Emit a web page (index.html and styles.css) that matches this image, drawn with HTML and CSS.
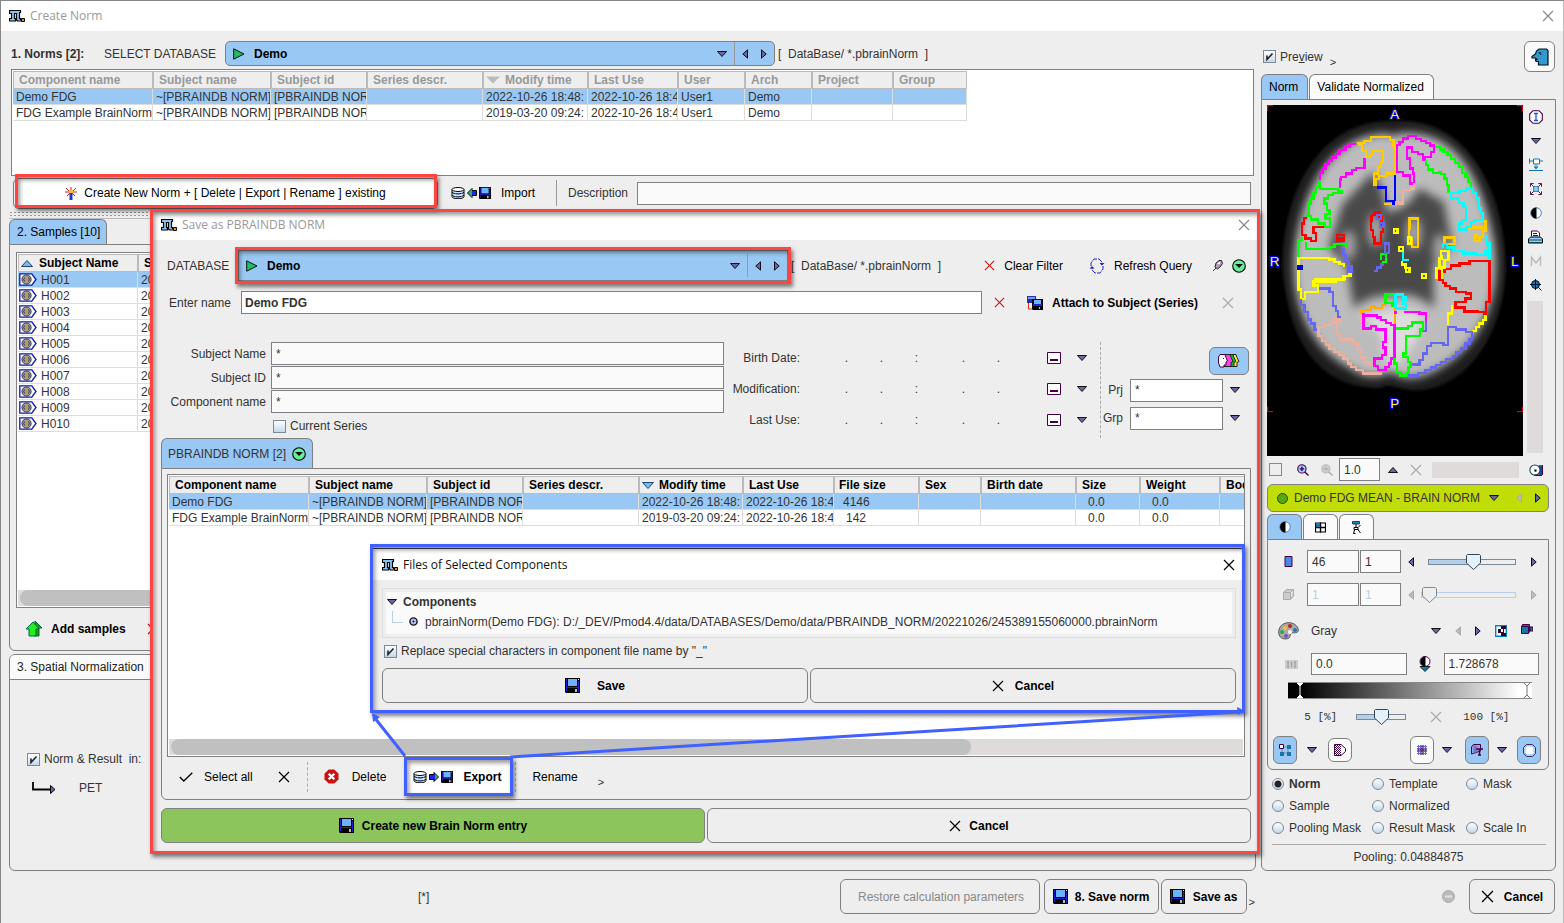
FILE: index.html
```html
<!DOCTYPE html>
<html lang="en">
<head>
<meta charset="utf-8">
<title>Create Norm</title>
<link rel="stylesheet" href="styles.css">
</head>
<body>
<svg class="sprite" aria-hidden="true">
  <symbol id="logo" viewBox="0 0 16 12"><path d="M.5.5h11v2h-1v6h1v1h1v1.500h-4l-1-1V3.500h-2v5h1v2.500h-6V8.500h2v-5h-2z" fill="#8ac4ee" stroke="#000" stroke-width="1.200"/><path d="M12.500 8.500h3v3h-3z" fill="#f80" stroke="#000"/></symbol>
  <symbol id="close" viewBox="0 0 12 12"><path d="M1 1l10 10M11 1L1 11" fill="none" stroke="currentColor" stroke-width="1.200"/></symbol>
  <symbol id="down" viewBox="0 0 10 6"><path d="M.5.5h9L5 5.500z" fill="#66a" stroke="#111"/></symbol>
  <symbol id="up" viewBox="0 0 10 6"><path d="M.5 5.500h9L5 .5z" fill="#66a" stroke="#111"/></symbol>
  <symbol id="left" viewBox="0 0 6 10"><path d="M5.500.8v8.400L.8 5z" fill="#66a" stroke="#111"/></symbol>
  <symbol id="right" viewBox="0 0 6 10"><path d="M.5.8v8.400L5.200 5z" fill="#66a" stroke="#111"/></symbol>
  <symbol id="leftg" viewBox="0 0 6 10"><path d="M5.500.8v8.400L.8 5z" fill="#bbb" stroke="#aaa"/></symbol>
  <symbol id="rightg" viewBox="0 0 6 10"><path d="M.5.8v8.400L5.200 5z" fill="#bbb" stroke="#aaa"/></symbol>
  <symbol id="play" viewBox="0 0 12 12"><path d="M.7.8L11 6 .7 11.200z" fill="#2b6" stroke="#111"/></symbol>
  <symbol id="floppy" viewBox="0 0 15 15"><path d="M0 0h15v15H1l-1-1z" fill="#000"/><path d="M1 1h1v12H1zM13 3h1v11h-1zM2 9h11v1H2z" fill="#22c"/><path d="M3 1h9v7H3z" fill="#6ab4ff"/><path d="M13 1h1v1h-1z" fill="#fff"/><path d="M10 11h2v3h-2z" fill="#bbb"/></symbol>
  <symbol id="database" viewBox="0 0 14 12"><path d="M1 2.500v7c0 3 12 3 12 0v-7" fill="#cfe4ff" stroke="#000"/><ellipse cx="7" cy="2.500" rx="6" ry="2" fill="#fff" stroke="#000"/><path d="M1 5c1 2.500 11 2.500 12 0M1 8c1 2.500 11 2.500 12 0" fill="none" stroke="#000"/><path d="M4 6.500h1M7 7h1M10 6.500h1M4 9.500h1M7 10h1M10 9.500h1" stroke="#36f"/></symbol>
  <symbol id="arrowl" viewBox="0 0 10 10"><path d="M.5 5L5 .5v2h4.500v5H5v2z" fill="#22e" stroke="#000"/><path d="M1 5l4-4v8z" fill="#2b5"/></symbol>
  <symbol id="arrowr" viewBox="0 0 10 10"><path d="M9.500 5L5 .5v2H.5v5H5v2z" fill="#22e" stroke="#000"/><path d="M9 5L6 2v6z" fill="#2b5"/></symbol>
  <symbol id="wand" viewBox="0 0 12 13"><path d="M6 0v5M1 1l4 4M11 1L7 5M0 5h12M2 9l3-3M10 9L7 6" stroke="#c22" fill="none"/><path d="M4 3h4v3H4z" fill="#fb3"/><path d="M4.500 6h3v7h-3z" fill="#23d"/></symbol>
  <symbol id="brain" viewBox="0 0 18 13"><path d="M.8.8h12L17 6.500l-4.200 5.700H.8z" fill="#fff" stroke="#11b" stroke-width="1.300"/><circle cx="7.500" cy="6.500" r="4.600" fill="#9aa09a" stroke="#333"/><path d="M5.500 4.500q-1.500 2 0 4M9.500 4.500q1.500 2 0 4" fill="none" stroke="#333"/><path d="M6.500 5l2 3M8.500 5l-2 3" stroke="#e83"/></symbol>
  <symbol id="addup" viewBox="0 0 18 16"><path d="M10 0l7 7h-3v8H9z" fill="#2a9a10" stroke="#063"/><path d="M8 1L1 8h3v7h7V8h3z" fill="#2e2" stroke="#064"/></symbol>
  <symbol id="greendown" viewBox="0 0 14 14"><circle cx="7" cy="7" r="6.300" fill="#6e9" stroke="#000" stroke-width="1.100"/><path d="M3 5h8L7 9z" fill="#111"/></symbol>
  <symbol id="refresh" viewBox="0 0 16 16"><path d="M2 8V5l3-4h5l3 3v3M14 8v3l-3 4H6l-3-3V9" fill="none" stroke="#22c" stroke-dasharray="5 1"/><path d="M10.500 5h5L13 7.500zM.5 10.500h5L3 8z" fill="#22c"/></symbol>
  <symbol id="pin" viewBox="0 0 10 12"><path d="M0 11l3-3" stroke="#333"/><path d="M3 3l3-2.500h2.500l1 3L7 7l-2.500 2L2 7z" fill="#b9b" stroke="#222"/><path d="M4 4l2-2h1v2z" fill="#fff"/></symbol>
  <symbol id="attach" viewBox="0 0 16 14"><path d="M0 0h9v7H0z" fill="#23a"/><path d="M1 1h7v2H1z" fill="#79f"/><path d="M1.500 7v6H6" fill="none" stroke="#e22"/><path d="M5 3h11v11H6l-1-1z" fill="#000"/><path d="M7 4h7v4H7z" fill="#6ab4ff"/><path d="M6 8h9v2H6z" fill="#22c"/><path d="M12 11h1v2h-1z" fill="#ccc"/></symbol>
  <symbol id="calendar" viewBox="0 0 14 12"><path d="M.5.5h13v11H.5z" fill="#fff" stroke="#404"/><path d="M3 8h8" stroke="#404" stroke-width="2"/></symbol>
  <symbol id="heads" viewBox="0 0 22 14"><path d="M13 .5h5l1 3 2 4-2 1v4h-7z" fill="#fe3" stroke="#222"/><path d="M10 .5h5l1 3 2 4-2 1v4H9z" fill="#1b2" stroke="#222"/><path d="M7 .5h5l1 3 2 4-2 1v4H6z" fill="#f4e" stroke="#222"/><path d="M2 .5h5l1 3 1.500 3.500-1.500 1v3H6v2H2L.5 9V3z" fill="#fff" stroke="#404"/><path d="M5 4h1v1H5z" fill="#222"/></symbol>
  <symbol id="delete" viewBox="0 0 16 16"><path d="M5 .5h6L15.500 5v6L11 15.500H5L.5 11V5z" fill="#c11"/><path d="M5 5l6 6M11 5l-6 6" stroke="#fff" stroke-width="2.400"/></symbol>
  <symbol id="tick" viewBox="0 0 14 10"><path d="M.8 5l4 4L13.300.8" fill="none" stroke="#000" stroke-width="1.300"/></symbol>
  <symbol id="face" viewBox="0 0 18 18"><path d="M8 1h7.500L17 2.500V17H7.500v-3.500H5L4.500 11.500H6L4.500 10H1V8.500L4.500 6 5.500 3z" fill="#39c" stroke="#012" stroke-width="1.200"/><path d="M7.500 5h3M9 6.500h1" stroke="#012"/></symbol>
  <symbol id="info" viewBox="0 0 14 14"><path d="M4 .7h6L13.300 4v6L10 13.300H4L.7 10V4z" fill="#fff" stroke="#404" stroke-width="1.100"/><path d="M5 3.500h4M7 3.500v7M5 10.500h4" stroke="#25d" stroke-width="1.300"/></symbol>
  <symbol id="level" viewBox="0 0 14 13"><path d="M.5 0v5M0 2.500h4M10 2.500h4M0 12h14" stroke="#17a"/><path d="M4.500.5h6v5h-6z" fill="#fff" stroke="#17a"/><path d="M7 6v2" stroke="#17a"/><path d="M4.500 8h5L7 11z" fill="#17a"/></symbol>
  <symbol id="fit" viewBox="0 0 13 13"><path d="M4 4h5v5H4z" fill="#9cf" stroke="#17a"/><path d="M.5 4V.5H4M9 .5h3.500V4M12.500 9v3.500H9M4 12.500H.5V9M1 1l3 3M12 1L9 4M12 12L9 9M1 12l3-3" fill="none" stroke="#404"/></symbol>
  <symbol id="contrast" viewBox="0 0 12 12"><circle cx="6" cy="6" r="5.300" fill="#fff" stroke="#48c"/><path d="M6.500 1v10.500A5.500 5.500 0 0 1 6.500.5z" fill="#000"/></symbol>
  <symbol id="printer" viewBox="0 0 15 14"><path d="M3.500 6V.5h6l2 2V6" fill="#fff" stroke="#404"/><path d="M5 3h4M5 5h5" stroke="#404"/><path d="M2.500 6.500h10l2 2v4H.5v-4z" fill="#9cf" stroke="#000"/><path d="M.5 9.500h14M.5 12h14" stroke="#145"/></symbol>
  <symbol id="mletter" viewBox="0 0 12 10"><path d="M1.500 10V1L6 7l4.500-6v9" fill="none" stroke="#bbb" stroke-width="1.400"/></symbol>
  <symbol id="target" viewBox="0 0 12 12"><circle cx="5.500" cy="5.500" r="4" fill="#17a" stroke="#013"/><path d="M5.500 0v11M0 5.500h11M8 8l3.500 3.500" stroke="#013"/></symbol>
  <symbol id="zoomin" viewBox="0 0 11 11"><circle cx="4.500" cy="4.500" r="3.800" fill="#9cf" stroke="#404"/><path d="M2.500 4.500h4M4.500 2.500v4M7 7l3.500 3.500" stroke="#404" stroke-width="1.300"/></symbol>
  <symbol id="zoomout" viewBox="0 0 11 11"><circle cx="4.500" cy="4.500" r="3.800" fill="#ccc" stroke="#bbb"/><path d="M2.500 4.500h4M7 7l3.500 3.500" stroke="#aaa" stroke-width="1.300"/></symbol>
  <symbol id="tape" viewBox="0 0 13 11"><path d="M9 1h4v9H9z" fill="#159"/><circle cx="5.500" cy="5.500" r="4.700" fill="#fff" stroke="#145"/><path d="M5 5h2v2H5z" fill="#000"/><path d="M12.500 1v9M5 10.500h7" stroke="#404"/></symbol>
  <symbol id="windows" viewBox="0 0 11 10"><path d="M.5.500h10v9H.5z" fill="#fff" stroke="#000" stroke-width="1.200"/><path d="M5.500 0v10M0 5h11" stroke="#000" stroke-width="1.400"/><path d="M1 1h4v3.500H1z" fill="#17a"/></symbol>
  <symbol id="tool" viewBox="0 0 10 13"><path d="M1 .5h7v2.500H1z" fill="#28b" stroke="#024" stroke-width=".8"/><path d="M4.500 3v3M2.500 6.500h4v2h-4zM3 9l-1 3.500h2M6 8l3 4M6.500 6.500L9 4" fill="none" stroke="#000"/></symbol>
  <symbol id="slab" viewBox="0 0 8 11"><path d="M.5.5h7v10h-7z" fill="#48e" stroke="#404"/></symbol>
  <symbol id="cube" viewBox="0 0 11 11"><path d="M.5 3.500h7v7h-7zM.5 3.500l3-3h7l-3 3M10.500.5v7l-3 3" fill="#ccc" stroke="#aaa"/></symbol>
  <symbol id="palette" viewBox="0 0 21 18"><path d="M9 .8c6-1 11 3 11.300 7 0 3-2 3-5 3-3-.5-3 1.500-3.500 4C11 18 .5 18.500.7 10 1 4 5 1.500 9 .8z" fill="#aaa" stroke="#555"/><circle cx="12" cy="4" r="2" fill="#b22"/><circle cx="7" cy="6" r="2" fill="#fb3"/><circle cx="4" cy="10" r="2" fill="#3a4"/><circle cx="8" cy="14" r="2" fill="#75b"/><circle cx="17" cy="8" r="2" fill="#27c"/><circle cx="12" cy="10" r="2" fill="#fff"/></symbol>
  <symbol id="invert" viewBox="0 0 12 12"><path d="M.7.7h10.600v10.600H.7z" fill="#fff" stroke="#08b" stroke-width="1.400"/><path d="M6 1h5v3H9v4h2v3H6V8H3V4h3z" fill="#303"/><path d="M6 4h2v3H6z" fill="#fff"/></symbol>
  <symbol id="camera" viewBox="0 0 12 10"><path d="M.5 2.500h7v7h-7zM.5 2.500l1-2h7v7l-1 2M9 3h3v4H9z" fill="#17a" stroke="#404"/></symbol>
  <symbol id="scale" viewBox="0 0 13 9"><path d="M0 0h13v9H0z" fill="#ccc"/><path d="M3 2v5M6.500 2v5M10 2v5M2 2h2M9 2h2M2 7h2M9 7h2" stroke="#999"/></symbol>
  <symbol id="contrastdown" viewBox="0 0 12 16"><circle cx="6" cy="5.500" r="5" fill="#fff" stroke="#404"/><path d="M6.500.5v10A5 5 0 0 1 6.500.5z" fill="#000"/><path d="M1 10.500h10l-5 5z" fill="#17a" stroke="#000" stroke-width=".8"/></symbol>
  <symbol id="nodes" viewBox="0 0 12 12"><path d="M3 3h6v6H3z" fill="none" stroke="#888"/><path d="M.5.5h4v4h-4z" fill="#fff" stroke="#404"/><path d="M8 1h4v4H8zM1 8h4v4H1zM8 8h4v4H8z" fill="#17a"/></symbol>
  <symbol id="halfd" viewBox="0 0 12 12"><path d="M.5.5H7l4.500 4v3L7 11.500H.5z" fill="#fff" stroke="#404"/><path d="M1 1.500h5M1 3.500h5M1 5.500h5M1 7.500h5M1 9.500h5" stroke="#404" stroke-dasharray="1 1"/><path d="M2 2.500h5M2 4.500h5M2 6.500h5M2 8.500h5M2 10.500h5" stroke="#404" stroke-dasharray="1 1"/></symbol>
  <symbol id="mesh" viewBox="0 0 10 10"><path d="M0 1.500h10M0 3.500h10M0 6.500h10M0 8.500h10M1.500 0v10M3.500 0v10M6.500 0v10M8.500 0v10" stroke="#66c"/><path d="M5 0v10M0 5h10" stroke="#404"/></symbol>
  <symbol id="tletter" viewBox="0 0 12 12"><path d="M.5 10V3l2-2.500h7V7z" fill="#9ad" stroke="#404"/><path d="M2 3h5M2 5h5M2 7h5M4 1v8" stroke="#66c"/><path d="M5 5h7M8.500 5v6M7 11h3" stroke="#404" stroke-width="1.500"/></symbol>
  <symbol id="octagon" viewBox="0 0 13 13"><path d="M3.500.7h6l2.800 2.800v6l-2.800 2.800h-6L.7 9.500v-6z" fill="#fff" stroke="#303"/><path d="M4 2h5l2 2v5l-2 2H4L2 9V4z" fill="none" stroke="#7cf"/></symbol>
  <symbol id="stop" viewBox="0 0 13 13"><circle cx="6.500" cy="6.500" r="6" fill="#bbb" stroke="#aaa"/><path d="M3 6.500h7" stroke="#ddd" stroke-width="2.400"/></symbol>
  <symbol id="bullet" viewBox="0 0 9 9"><circle cx="4.500" cy="4.500" r="3.600" fill="#bbe" stroke="#111" stroke-width="1.400"/><path d="M4 4h1v1H4z" stroke="#111" stroke-width=".8"/></symbol>
  <symbol id="branch" viewBox="0 0 24 12"><path d="M1 0v7.500h20" fill="none" stroke="#000" stroke-width="1.800"/><path d="M18.500 3.500v8l4.500-4z" fill="#66a" stroke="#000"/></symbol>
  <symbol id="sortg" viewBox="0 0 14 7"><path d="M0 0h14L7 7z" fill="#bbb"/></symbol>
  <symbol id="sortd" viewBox="0 0 12 7"><path d="M.5.5h11L6 6.500z" fill="#7bd" stroke="#247"/></symbol>
  <symbol id="sortu" viewBox="0 0 12 7"><path d="M.5 6.500h11L6 .5z" fill="#7bd" stroke="#247"/></symbol>
</svg>

<div class="app">
  <header class="titlebar main-title">
    <svg class="i-logo"><use href="#logo"/></svg><h1>Create Norm</h1>
    <button class="icon-btn dim" aria-label="Close"><svg class="i12"><use href="#close"/></svg></button>
  </header>

  <div class="workspace">
    <main class="left">
      <div class="norm-head">
        <b class="norms-label">1. Norms [2]:</b>
        <label class="db-label" for="db-main">SELECT DATABASE</label>
        <div class="combo">
          <svg class="i12"><use href="#play"/></svg>
          <select id="db-main"><option>Demo</option></select>
          <button class="icon-btn" aria-label="Previous"><svg class="i-h"><use href="#left"/></svg></button>
          <button class="icon-btn" aria-label="Next"><svg class="i-h"><use href="#right"/></svg></button>
        </div>
        <span class="pre">[  DataBase/ *.pbrainNorm  ]</span>
      </div>

      <div class="table-box norms-box">
        <table class="grid muted norms">
          <colgroup><col class="w140"><col class="w118"><col class="w96"><col class="w116"><col class="w105"><col class="w90"><col class="w67"><col class="w67"><col class="w81"><col class="w74"></colgroup>
          <thead><tr><th>Component name</th><th>Subject name</th><th>Subject id</th><th>Series descr.</th><th class="sorted"><svg class="i-sortg"><use href="#sortg"/></svg>Modify time</th><th>Last Use</th><th>User</th><th>Arch</th><th>Project</th><th>Group</th></tr></thead>
          <tbody>
            <tr class="sel"><td>Demo FDG</td><td>~[PBRAINDB NORM]</td><td>[PBRAINDB NORM]</td><td></td><td>2022-10-26 18:48:</td><td>2022-10-26 18:48</td><td>User1</td><td>Demo</td><td></td><td></td></tr>
            <tr><td>FDG Example BrainNorm</td><td>~[PBRAINDB NORM]</td><td>[PBRAINDB NORM]</td><td></td><td>2019-03-20 09:24:</td><td>2022-10-26 18:48</td><td>User1</td><td>Demo</td><td></td><td></td></tr>
          </tbody>
        </table>
      </div>

      <div class="create-row">
        <div class="marked create-wrap">
          <button class="btn create-btn"><svg class="i-wand"><use href="#wand"/></svg>Create New Norm + [ Delete | Export | Rename ] existing</button>
        </div>
        <button class="plain import"><svg class="i-db"><use href="#database"/></svg><svg class="i10"><use href="#arrowl"/></svg><svg class="i12"><use href="#floppy"/></svg><span class="gap8">Import</span></button>
        <label class="desc-label" for="desc">Description</label>
        <input class="field desc" id="desc" type="text">
      </div>
      <div class="splitter"></div>

      <div class="tabs"><button class="tab on samples-tab">2. Samples [10]</button></div>
      <section class="panel samples">
        <div class="table-box samples-box">
          <table class="grid subj">
            <colgroup><col class="w120"><col class="w96"></colgroup>
            <thead><tr><th class="sortcol"><svg class="i-sort"><use href="#sortu"/></svg>Subject Name</th><th>S</th></tr></thead>
            <tbody>
              <tr class="sel"><td><svg class="i-brain"><use href="#brain"/></svg>H001</td><td>20</td></tr>
              <tr><td><svg class="i-brain"><use href="#brain"/></svg>H002</td><td>20</td></tr>
              <tr><td><svg class="i-brain"><use href="#brain"/></svg>H003</td><td>20</td></tr>
              <tr><td><svg class="i-brain"><use href="#brain"/></svg>H004</td><td>20</td></tr>
              <tr><td><svg class="i-brain"><use href="#brain"/></svg>H005</td><td>20</td></tr>
              <tr><td><svg class="i-brain"><use href="#brain"/></svg>H006</td><td>20</td></tr>
              <tr><td><svg class="i-brain"><use href="#brain"/></svg>H007</td><td>20</td></tr>
              <tr><td><svg class="i-brain"><use href="#brain"/></svg>H008</td><td>20</td></tr>
              <tr><td><svg class="i-brain"><use href="#brain"/></svg>H009</td><td>20</td></tr>
              <tr><td><svg class="i-brain"><use href="#brain"/></svg>H010</td><td>20</td></tr>
            </tbody>
          </table>
          <div class="hscroll"><div class="thumb"></div></div>
        </div>
        <div class="samples-actions">
          <button class="plain strong"><svg class="i-up"><use href="#addup"/></svg>Add samples</button>
          <button class="icon-btn red" aria-label="Remove"><svg class="i12"><use href="#close"/></svg></button>
        </div>
      </section>

      <section class="panel spatial">
        <h2>3. Spatial Normalization</h2>
        <div class="spatial-body">
          <label class="check-line"><input type="checkbox" checked><span class="pre">Norm &amp; Result  in:</span></label>
          <div class="pet"><svg class="i-branch"><use href="#branch"/></svg><span>PET</span></div>
        </div>
      </section>
    </main>

    <aside class="right">
      <div class="preview-head">
        <label class="check-line"><input type="checkbox" checked><span>Pre<u>v</u>iew</span></label><span class="more">&gt;</span>
        <button class="btn face-btn" aria-label="Orientation"><svg class="i18"><use href="#face"/></svg></button>
      </div>
      <div class="tabs"><button class="tab on">Norm</button><button class="tab">Validate Normalized</button></div>
      <section class="panel preview">
        <div class="viewer">
          <svg class="brain-view" viewBox="0 0 768 1053" role="img" aria-label="Brain slice with regions">
            <defs><filter id="soft" x="-20%" y="-20%" width="140%" height="140%"><feGaussianBlur stdDeviation="14"/></filter><filter id="soft2" x="-20%" y="-20%" width="140%" height="140%"><feGaussianBlur stdDeviation="5"/></filter></defs>
            <rect width="768" height="1053" fill="#000"/>
            <path filter="url(#soft2)" d="M380 48C600 30 720 260 716 500C705 700 600 840 460 856C400 860 370 830 340 850C150 850 60 700 46 480C50 240 170 40 380 48z" fill="#1c1c1c"/>
            <path filter="url(#soft)" d="M360 84Q378 100 396 84C560 70 640 200 680 400C710 580 640 730 500 800Q420 840 372 800Q310 835 250 790C110 720 60 560 88 400C120 230 200 90 360 84z" fill="#bcbcbc"/>
            <path filter="url(#soft)" d="M300 220Q330 170 360 320Q420 320 455 250L530 290L555 420L500 480L500 610Q450 560 380 570Q300 570 260 610L240 480L185 430L225 300z" fill="#484848"/>
            <g filter="url(#soft)" fill="#a4a4a4"><ellipse cx="325" cy="375" rx="24" ry="50"/><ellipse cx="440" cy="385" rx="24" ry="50"/><ellipse cx="245" cy="420" rx="22" ry="44"/><ellipse cx="520" cy="430" rx="22" ry="44"/></g>
            <path filter="url(#soft)" d="M290 640Q380 590 470 630L450 700Q400 780 378 780Q340 760 350 700z" fill="#ddd"/>
            <g transform="translate(-33 -225)" fill="none" stroke-width="7" shape-rendering="crispEdges">
              <path stroke="#f0f" d="M300 342H280V350H268V360H250V372H240V382H228V392H218V402H208V415H200V428H192V450M325 385V413H300V420H288V430H270V440H255V448H252V475M422 430V345H430V335H440V325H455V318H480V326H495V332H510V338H522V346H533V365H525V380H505V388H500V372H485V365H468V352H452V385H462V415H470V430H474V460H462V436H440V425H422"/>
              <path stroke="#fc0" d="M303 338H325V332H345V320H402V330H412V350H416V430H390V438H368V447H360V465H354V430H366V410H374V395H380V362H350V374H342V380H330V362H318V345H305M385 522H440M460 565H485V650H468V625H458V595H460zM565 622H595V642H565zM608 597H640V592H680M670 572H688V602H680V620H670V632H658V612H665"/>
              <path stroke="#00f" d="M362 472H390V512H412V522H416V435"/>
              <path stroke="#ebb0a0" d="M474 460V475H465V480H440V516H420V522H440V506"/>
              <path stroke="#0f0" d="M536 350H552V358H562V366H574V375H585V386H596V398H608V410H618V428H628V440H637V455H645V470M510 390V405H515V418H530V428H548V425H555V432H565V445H572V465H577V490M190 452V470H180V485H172V505H163V520H157V556M190 477H245V482H257V488H230V495H215V505H205V520H212V540H220V552H208V565H222V590H205V580H185V568H165V558H150M125 690V630H138V622M150 637V657H222V650H235V642H270V655M375 690V672H390V695H378"/>
              <path stroke="#0ff" d="M580 488H610V482H630V475H648V488H660V505H668V535H675V548H680V570H655V576H645V590H632V598H608V580H618V570H630V530H622V518H608V505H585V490M560 655V642H572V652H592V662H622V670H660V675H688V660H690M693 615V640H700V690M440 665V690H458"/>
              <path stroke="#f00" d="M152 563H143V580H137V615H148V625H165V632H180V608H172V590H205M243 615H263V631H243zM243 623H263M347 555H355V547H370V560H376V590H380V605H374V640H355V620H350V600H345zM700 750V692H640V700H610V706H585V716H565V725H555V748"/>
              <path stroke="#ff0" d="M127 750V683H218V688H235V695H250V702H263V710M283 728V738H265V746H175M413 597H424V608H413zM455 622H465V640H455zM429 650H441V662H429zM498 732H510V744H498zM437 693V703H448V713H460V725H450V710M555 662H577V690H565V712H556V742H541V714H550V685H557z"/>
              <path stroke="#66e" d="M262 655V675H268V690H278V708H286V725H275V705M363 555H375V566H363zM371 578H382V590H371zM387 640H399V668H387zM385 703H375V712H362V722H355"/>
              <path fill="#00f" stroke="#00c" d="M127 709h10v6h-10z"/>
            </g>
            <g transform="translate(-33 495)" fill="none" stroke-width="7" shape-rendering="crispEdges">
              <path stroke="#ff0" d="M127 0V58H135V86H146V65H185V46H172V34H240V28H262V18H278V8M588 105V130H576V165M688 135V150H680V160H668V170H660V183H648M541 0V22H558V0"/>
              <path stroke="#66e" d="M135 88V105H145V125H155V148H165V160H175V178H188M190 55H220V65H230V108H240V122H245V140H255M465 283H490V270H500V250H512V228H525V218H562V225H575V170H600V178H630V185H648V208H640V220H628V235H615V245H600V258H590V267H570V276H555V285H540V292H525V300H508V308H485V316H455M510 140V182H498"/>
              <path stroke="#ebb0a0" d="M187 182V170H205V165H225V158H235V148H255V158H243V195H252V208H290V220H305V240H315V262H325V275H340V282H358M187 178V198H198V212H210V225H220V235H235V245H250V255H262V265H275V280H285V290H300V300H320V310H377M315 135V160"/>
              <path stroke="#fa0" d="M316 132V120H345V108H355V114H378V105H390M416 110V165"/>
              <path stroke="#f0f" d="M322 128V175H345V168H360V178H388V215H380V232H388V255H378V265H355V288H365V300H388V290H398V280H405V265H415V165H405V158H390V150H375V142H362V136H325M418 132V122M445 125H490V130H510V155"/>
              <path stroke="#0f0" d="M388 73H415V108H408V98H388zM420 175H455V168H468V157H500V178H492V198H450V250H440V260H455V275H463V290H457V308H450V316H433V305H422V280H415V265"/>
              <path stroke="#0ff" d="M420 73H440V82H450V92H442V102H450V115H420M418 112V73"/>
              <path stroke="#f00" d="M550 0V30H560V38H568V48H582V55H600V65H630V70H644V85H628V95H598V112H625V124H665V126H685V130H690V95H700V0"/>
            </g>
            <path fill="none" stroke="#f00" stroke-width="3" d="M2 18V2H18M750 2H766V18M2 905V920H18M750 920H766V905"/>
            <g class="axis"><text x="370" y="42">A</text><text x="8" y="482">R</text><text x="732" y="482">L</text><text x="370" y="908">P</text></g>
          </svg>
          <div class="view-tools">
            <button class="icon-btn" aria-label="Info"><svg class="i14"><use href="#info"/></svg></button>
            <button class="icon-btn" aria-label="More"><svg class="i-v"><use href="#down"/></svg></button>
            <button class="icon-btn" aria-label="Level"><svg class="i14"><use href="#level"/></svg></button>
            <button class="icon-btn" aria-label="Fit"><svg class="i12"><use href="#fit"/></svg></button>
            <button class="icon-btn" aria-label="Contrast"><svg class="i12"><use href="#contrast"/></svg></button>
            <button class="icon-btn" aria-label="Print"><svg class="i15"><use href="#printer"/></svg></button>
            <button class="icon-btn" aria-label="Marker"><svg class="i12"><use href="#mletter"/></svg></button>
            <button class="icon-btn" aria-label="Centre"><svg class="i12"><use href="#target"/></svg></button>
            <div class="vtrack"></div>
          </div>
        </div>
        <div class="zoom-row">
          <input type="checkbox" class="flat" aria-label="Lock zoom">
          <button class="icon-btn zi" aria-label="Zoom in"><svg class="i12"><use href="#zoomin"/></svg></button>
          <button class="icon-btn" aria-label="Zoom out"><svg class="i12"><use href="#zoomout"/></svg></button>
          <input class="field zoom-val" type="text" value="1.0" aria-label="Zoom">
          <button class="icon-btn" aria-label="Increase"><svg class="i-v"><use href="#up"/></svg></button>
          <button class="icon-btn faint" aria-label="Reset"><svg class="i12"><use href="#close"/></svg></button>
          <div class="htrack"></div>
          <button class="icon-btn" aria-label="Tape"><svg class="i14"><use href="#tape"/></svg></button>
        </div>
        <div class="mean-bar">
          <span class="dot"></span>
          <select aria-label="Image"><option>Demo FDG MEAN - BRAIN NORM</option></select>
          <button class="icon-btn" aria-label="Previous"><svg class="i-h"><use href="#leftg"/></svg></button>
          <button class="icon-btn" aria-label="Next"><svg class="i-h"><use href="#right"/></svg></button>
        </div>
        <div class="tabs subtabs">
          <button class="tab on" aria-label="Colors"><svg class="i12"><use href="#contrast"/></svg></button>
          <button class="tab" aria-label="Layout"><svg class="i11"><use href="#windows"/></svg></button>
          <button class="tab" aria-label="Tools"><svg class="i13"><use href="#tool"/></svg></button>
        </div>
        <div class="panel color-panel">
          <div class="crow slice">
            <svg class="i11 lead"><use href="#slab"/></svg>
            <input class="field n1" type="text" value="46" aria-label="Slice"><input class="field n2" type="text" value="1" aria-label="Step">
            <button class="icon-btn" aria-label="Previous"><svg class="i-h"><use href="#left"/></svg></button>
            <input class="slider" type="range" value="52" aria-label="Slice slider">
            <button class="icon-btn" aria-label="Next"><svg class="i-h"><use href="#right"/></svg></button>
          </div>
          <div class="crow slice off">
            <svg class="i11 lead"><use href="#cube"/></svg>
            <input class="field n1" type="text" value="1" aria-label="Frame"><input class="field n2" type="text" value="1" aria-label="Frame step">
            <button class="icon-btn" aria-label="Previous"><svg class="i-h"><use href="#leftg"/></svg></button>
            <input class="slider" type="range" value="0" aria-label="Frame slider">
            <button class="icon-btn" aria-label="Next"><svg class="i-h"><use href="#rightg"/></svg></button>
          </div>
          <div class="crow colors">
            <svg class="i21"><use href="#palette"/></svg>
            <select aria-label="Color table"><option>Gray</option></select>
            <button class="icon-btn" aria-label="Previous"><svg class="i-h"><use href="#leftg"/></svg></button>
            <button class="icon-btn" aria-label="Next"><svg class="i-h"><use href="#right"/></svg></button>
            <button class="icon-btn inv" aria-label="Invert"><svg class="i12"><use href="#invert"/></svg></button>
            <button class="icon-btn snap" aria-label="Snapshot"><svg class="i12"><use href="#camera"/></svg></button>
          </div>
          <div class="crow range">
            <svg class="i13 lead"><use href="#scale"/></svg>
            <input class="field" type="text" value="0.0" aria-label="Minimum">
            <button class="icon-btn" aria-label="Auto range"><svg class="i16"><use href="#contrastdown"/></svg></button>
            <input class="field" type="text" value="1.728678" aria-label="Maximum">
          </div>
          <svg class="ramp" viewBox="0 0 244 17" preserveAspectRatio="none"><defs><linearGradient id="rg"><stop offset=".05" stop-color="#000"/><stop offset=".95" stop-color="#fff"/></linearGradient></defs><rect width="244" height="17" fill="url(#rg)"/><path d="M0 .5h244M0 16.500h244" stroke="#888"/><path d="M9 1h6l-3 3zM9 16h6l-3-3zM12 2v13" fill="#fff" stroke="#fff"/><path d="M236 1l3 3 3-3M236 16l3-3 3 3M239 4v9" fill="#fff" stroke="#777"/></svg>
          <div class="crow percent">
            <span class="pre">  5 [%]</span>
            <input class="slider small" type="range" value="52" aria-label="Threshold">
            <button class="icon-btn faint" aria-label="Reset"><svg class="i12"><use href="#close"/></svg></button>
            <span class="pre">100 [%]</span>
          </div>
          <div class="crow modes">
            <button class="btn on" aria-label="Link"><svg class="i12"><use href="#nodes"/></svg></button>
            <button class="icon-btn" aria-label="Link options"><svg class="i-v"><use href="#down"/></svg></button>
            <button class="btn light sq" aria-label="Half"><svg class="i12"><use href="#halfd"/></svg></button>
            <button class="btn light push" aria-label="Mesh"><svg class="i10"><use href="#mesh"/></svg></button>
            <button class="icon-btn wide" aria-label="Mesh options"><svg class="i-v"><use href="#down"/></svg></button>
            <button class="btn on" aria-label="Text"><svg class="i12"><use href="#tletter"/></svg></button>
            <button class="icon-btn tight" aria-label="Text options"><svg class="i-v"><use href="#down"/></svg></button>
            <button class="btn on" aria-label="Contour"><svg class="i13"><use href="#octagon"/></svg></button>
          </div>
        </div>
        <div class="radios">
          <label><input type="radio" name="show" checked><b>Norm</b></label><label><input type="radio" name="show">Template</label><label><input type="radio" name="show">Mask</label>
          <label><input type="radio" name="show">Sample</label><label class="span2"><input type="radio" name="show">Normalized</label>
          <label><input type="radio" name="show">Pooling Mask</label><label><input type="radio" name="show">Result Mask</label><label><input type="radio" name="show">Scale In</label>
        </div>
        <p class="pooling">Pooling: 0.04884875</p>
      </section>
    </aside>
  </div>

  <footer class="footer">
    <span class="star">[*]</span>
    <button class="btn restore">Restore calculation parameters</button>
    <button class="btn save-norm"><svg class="i15"><use href="#floppy"/></svg>8. Save norm</button>
    <button class="btn save-as"><svg class="i15"><use href="#floppy"/></svg>Save as</button>
    <span class="more">&gt;</span>
    <svg class="i13 stop"><use href="#stop"/></svg>
    <button class="btn cancel-main"><svg class="i13"><use href="#close"/></svg>Cancel</button>
  </footer>

  <section class="dialog marked" role="dialog" aria-label="Save as PBRAINDB NORM">
    <header class="titlebar dialog-title">
      <svg class="i-logo"><use href="#logo"/></svg><h2>Save as PBRAINDB NORM</h2>
      <button class="icon-btn dim" aria-label="Close"><svg class="i12"><use href="#close"/></svg></button>
    </header>
    <div class="dialog-body">
      <div class="db-row">
        <label for="db-dlg">DATABASE</label>
        <div class="marked combo-mark">
          <div class="combo">
            <svg class="i12"><use href="#play"/></svg>
            <select id="db-dlg"><option>Demo</option></select>
            <button class="icon-btn" aria-label="Previous"><svg class="i-h"><use href="#left"/></svg></button>
            <button class="icon-btn" aria-label="Next"><svg class="i-h"><use href="#right"/></svg></button>
          </div>
        </div>
        <span class="pre">[  DataBase/ *.pbrainNorm  ]</span>
        <div class="db-tools">
          <button class="plain"><svg class="i11 red"><use href="#close"/></svg>Clear Filter</button>
          <button class="plain refresh"><svg class="i16"><use href="#refresh"/></svg>Refresh Query</button>
          <button class="icon-btn pin" aria-label="Pin"><svg class="i12"><use href="#pin"/></svg></button>
          <button class="icon-btn" aria-label="Options"><svg class="i14"><use href="#greendown"/></svg></button>
        </div>
      </div>
      <div class="name-row">
        <label for="entry">Enter name</label>
        <input class="field white strong" id="entry" type="text" value="Demo FDG">
        <button class="icon-btn red" aria-label="Clear"><svg class="i11"><use href="#close"/></svg></button>
        <button class="plain strong attach"><svg class="i16"><use href="#attach"/></svg>Attach to Subject (Series)</button>
        <button class="icon-btn faint" aria-label="Detach"><svg class="i12"><use href="#close"/></svg></button>
      </div>
      <div class="filters">
        <div class="text-filters">
          <label for="f1">Subject Name</label><input class="field" id="f1" type="text" value="*">
          <label for="f2">Subject ID</label><input class="field" id="f2" type="text" value="*">
          <label for="f3">Component name</label><input class="field" id="f3" type="text" value="*">
          <label class="check-line"><input type="checkbox"><span>Current Series</span></label>
        </div>
        <div class="date-filters">
          <span>Birth Date:</span><i>.</i><i>.</i><i>:</i><i>.</i><i>.</i><button class="icon-btn" aria-label="Calendar"><svg class="i14"><use href="#calendar"/></svg></button><button class="icon-btn" aria-label="Options"><svg class="i-v"><use href="#down"/></svg></button>
          <span>Modification:</span><i>.</i><i>.</i><i>:</i><i>.</i><i>.</i><button class="icon-btn" aria-label="Calendar"><svg class="i14"><use href="#calendar"/></svg></button><button class="icon-btn" aria-label="Options"><svg class="i-v"><use href="#down"/></svg></button>
          <span>Last Use:</span><i>.</i><i>.</i><i>:</i><i>.</i><i>.</i><button class="icon-btn" aria-label="Calendar"><svg class="i14"><use href="#calendar"/></svg></button><button class="icon-btn" aria-label="Options"><svg class="i-v"><use href="#down"/></svg></button>
        </div>
        <div class="group-filters">
          <button class="btn on heads" aria-label="Subjects"><svg class="i22"><use href="#heads"/></svg></button>
          <label for="prj">Prj</label><input class="field white" id="prj" type="text" value="*"><button class="icon-btn" aria-label="Projects"><svg class="i-v"><use href="#down"/></svg></button>
          <label for="grp">Grp</label><input class="field white" id="grp" type="text" value="*"><button class="icon-btn" aria-label="Groups"><svg class="i-v"><use href="#down"/></svg></button>
        </div>
      </div>
      <div class="tabs"><button class="tab on norm-tab">PBRAINDB NORM [2]<svg class="i14"><use href="#greendown"/></svg></button></div>
      <div class="panel list-panel">
        <div class="table-box list-box">
          <table class="grid list">
            <colgroup><col class="w140"><col class="w118"><col class="w96"><col class="w116"><col class="w104"><col class="w91"><col class="w85"><col class="w62"><col class="w95"><col class="w64"><col class="w80"><col class="w74"></colgroup>
            <thead><tr><th>Component name</th><th>Subject name</th><th>Subject id</th><th>Series descr.</th><th class="sorted"><svg class="i-sort"><use href="#sortd"/></svg>Modify time</th><th>Last Use</th><th class="near">File size</th><th>Sex</th><th>Birth date</th><th>Size</th><th>Weight</th><th>Body</th></tr></thead>
            <tbody>
              <tr class="sel"><td>Demo FDG</td><td>~[PBRAINDB NORM]</td><td>[PBRAINDB NORM]</td><td></td><td>2022-10-26 18:48:</td><td>2022-10-26 18:48</td><td class="num4">4146</td><td></td><td></td><td class="num">0.0</td><td class="num">0.0</td><td></td></tr>
              <tr><td>FDG Example BrainNorm</td><td>~[PBRAINDB NORM]</td><td>[PBRAINDB NORM]</td><td></td><td>2019-03-20 09:24:</td><td>2022-10-26 18:48</td><td class="num">142</td><td></td><td></td><td class="num">0.0</td><td class="num">0.0</td><td></td></tr>
            </tbody>
          </table>
          <div class="hscroll"><div class="thumb list-thumb"></div></div>
        </div>
        <div class="list-tools">
          <button class="plain all"><svg class="i14"><use href="#tick"/></svg>Select all</button>
          <button class="icon-btn" aria-label="Deselect"><svg class="i12"><use href="#close"/></svg></button>
          <span class="vsep"></span>
          <button class="plain"><svg class="i15"><use href="#delete"/></svg>Delete</button>
          <div class="marked blue export-mark"><button class="export"><svg class="i-db"><use href="#database"/></svg><svg class="i10"><use href="#arrowr"/></svg><svg class="i12"><use href="#floppy"/></svg><span class="gap8">Export</span></button></div>
          <span class="vsep near"></span>
          <button class="plain">Rename</button>
          <span class="more">&gt;</span>
        </div>
      </div>
      <div class="dialog-actions">
        <button class="btn green"><svg class="i15"><use href="#floppy"/></svg>Create new Brain Norm entry</button>
        <button class="btn"><svg class="i12"><use href="#close"/></svg>Cancel</button>
      </div>
    </div>

    <section class="files marked blue" role="dialog" aria-label="Files of Selected Components">
      <header class="titlebar files-title">
        <svg class="i-logo"><use href="#logo"/></svg><h3>Files of Selected Components</h3>
        <button class="icon-btn" aria-label="Close"><svg class="i12"><use href="#close"/></svg></button>
      </header>
      <div class="files-body">
        <div class="tree">
          <div class="node"><svg class="i-v"><use href="#down"/></svg><b>Components</b></div>
          <div class="leaf"><svg class="i9"><use href="#bullet"/></svg><span>pbrainNorm(Demo FDG): D:/_DEV/Pmod4.4/data/DATABASES/Demo/data/PBRAINDB_NORM/20221026/245389155060000.pbrainNorm</span></div>
        </div>
        <label class="check-line"><input type="checkbox" checked><span>Replace special characters in component file name by "_"</span></label>
        <div class="files-actions">
          <button class="btn save"><svg class="i15"><use href="#floppy"/></svg>Save</button>
          <button class="btn"><svg class="i12"><use href="#close"/></svg>Cancel</button>
        </div>
      </div>
    </section>
    <svg class="arrows" aria-hidden="true"><path d="M252 544L221 505M357 545L1086 500" fill="none" stroke="#4060ff" stroke-width="3"/><path d="M219 501l8 4-7 5zM1092 499l-8-4 1 8z" fill="#4060ff"/></svg>
  </section>
</div>
</body>
</html>
```
FILE: styles.css
```css
* { box-sizing: border-box; }
body { margin: 0; font: 12px/16px "Liberation Sans", Arial, sans-serif; color: #333; background: #eee; }
button, input, select { font: inherit; color: inherit; margin: 0; }
button { color: #000; padding: 0; }
h1, h2, h3, p { margin: 0; font-size: 12px; font-weight: 400; }
svg { display: block; flex: none; }
.sprite { position: absolute; width: 0; height: 0; }
.pre { white-space: pre; }

/* icon sizes */
.i9 { width: 9px; height: 9px; }
.i10 { width: 10px; height: 10px; }
.i11 { width: 11px; height: 11px; }
.i12 { width: 12px; height: 12px; }
.i13 { width: 13px; height: 13px; }
.i14 { width: 14px; height: 14px; }
.i15 { width: 15px; height: 15px; }
.i16 { width: 16px; height: 16px; }
.i18 { width: 18px; height: 18px; }
.i21 { width: 21px; height: 18px; }
.i22 { width: 22px; height: 14px; }
.i-v { width: 10px; height: 6px; }
.i-h { width: 6px; height: 10px; }
.i-db { width: 14px; height: 12px; }
.i-logo { width: 16px; height: 12px; }
.i-wand { width: 12px; height: 13px; }
.i-up { width: 18px; height: 16px; }
.i-branch { width: 24px; height: 12px; }

/* shared controls */
.icon-btn { border: 0; background: none; display: flex; align-items: center; justify-content: center; flex: none; }
.plain { border: 0; background: none; display: flex; align-items: center; white-space: nowrap; flex: none; }
.strong { font-weight: 700; }
.dim { color: #888; }
.faint { color: #aaa; }
.red { color: #c11; }
.gap8 { margin-left: 8px; }
.btn { display: flex; align-items: center; justify-content: center; border: 1px solid #808080; border-radius: 6px; background: #eee; font-weight: 700; height: 35px; white-space: nowrap; }
.btn.on { background: #9ac8f4; }
.btn.light { background: #fafafa; }
.field { border: 1px solid #808080; border-radius: 0; background: #fafafa; padding: 0 4px; height: 23px; min-width: 0; outline: 0; }
.field.white { background: #fff; }
.more { color: #333; padding-top: 10px; font-size: 11px; }
select { appearance: none; border: 0; background: url("data:image/svg+xml,%3Csvg xmlns='http://www.w3.org/2000/svg' width='10' height='6'%3E%3Cpath d='M.5.5h9L5 5.500z' fill='%2366a' stroke='%23111'/%3E%3C/svg%3E") no-repeat; outline: 0; min-width: 0; }
.check-line { display: flex; align-items: center; white-space: nowrap; gap: 4px; }
input[type="checkbox"] { appearance: none; flex: none; width: 13px; height: 13px; border: 1px solid #7a8a99; background: linear-gradient(#fff, #c4d8ea); }
input[type="checkbox"]:checked { background: url("data:image/svg+xml,%3Csvg xmlns='http://www.w3.org/2000/svg' width='11' height='11'%3E%3Cpath d='M3 4.500v4L8.500 2.500' fill='none' stroke='%23222' stroke-width='1.600'/%3E%3C/svg%3E"), linear-gradient(#fff, #c4d8ea); }
input[type="checkbox"].flat { background: #eee; }
input[type="radio"] { appearance: none; flex: none; width: 12px; height: 12px; border: 1px solid #7a8a99; border-radius: 50%; background: linear-gradient(#fff, #c4d8ea); }
input[type="radio"]:checked { background: radial-gradient(circle, #222 0 3px, transparent 4px), linear-gradient(#fff, #c4d8ea); }
.slider { appearance: none; background: none; height: 20px; outline: 0; min-width: 0; }
.slider::-webkit-slider-runnable-track { height: 6px; border: 1px solid #7a8a99; background: linear-gradient(90deg, #b4cfec 50%, #eee 50%); }
.slider::-webkit-slider-thumb { appearance: none; width: 15px; height: 16px; margin-top: -6px; background: url("data:image/svg+xml,%3Csvg xmlns='http://www.w3.org/2000/svg' width='15' height='16'%3E%3Cpath d='M.5 1.500l1-1h12l1 1V9l-7 6.500L.5 9z' fill='%23e4f0fb' stroke='%23345'/%3E%3C/svg%3E"); }
.off .slider::-webkit-slider-runnable-track { border-color: #b8cfe5; background: #eee; }
.off .slider::-webkit-slider-thumb { background: url("data:image/svg+xml,%3Csvg xmlns='http://www.w3.org/2000/svg' width='15' height='16'%3E%3Cpath d='M.5 1.500l1-1h12l1 1V9l-7 6.500L.5 9z' fill='%23eee' stroke='%237a8a99'/%3E%3C/svg%3E"); }
.off .field { color: #b8cfe5; }
.panel { border: 1px solid #808080; border-radius: 0 0 6px 6px; }
.tabs { display: flex; gap: 1px; }
.tab { border: 1px solid #808080; border-bottom: 0; border-radius: 6px 6px 0 0; background: #fafafa; height: 25px; padding: 0 9px 0 7px; display: flex; align-items: center; justify-content: center; }
.tab.on { background: #9ac8f4; }
.table-box { border: 1px solid #808080; background: #fff; padding: 1px; overflow: hidden; }

/* highlighted areas */
.marked { position: relative; }
.marked::after { content: ""; position: absolute; inset: 0; z-index: 2; pointer-events: none; border: 3px solid #ff4444; box-shadow: 2px 3px 4px rgba(0, 0, 0, .5), inset 2px 3px 4px rgba(0, 0, 0, .4); }
.marked.blue::after { border-color: #4060ff; }

/* data tables */
.grid { table-layout: fixed; border-collapse: separate; border-spacing: 0; }
.grid th { height: 18px; padding: 0 0 0 5px; text-align: left; color: #000; background: #eee; border: 1px solid #bbb; overflow: hidden; white-space: nowrap; }
.grid.muted th { color: #999; }
.grid td { height: 16px; padding: 1px 0 0 3px; line-height: 14px; border: solid #ddd; border-width: 0 1px 1px 0; overflow: hidden; white-space: nowrap; }
.grid tr.sel td { background: #9ac8f4; }
.grid .sorted svg { display: inline-block; margin: 0 5px 0 -3px; }
.grid .near { padding-left: 4px; }
.grid .num4 { padding-left: 9px; }
.grid .num { padding-left: 12px; }
.i-sortg { width: 14px; height: 8px; }
.i-sort { width: 12px; height: 7px; }
.norms { width: 954px; }
.list { width: 1125px; }
.subj { width: 216px; }
.subj .sortcol { padding-left: 4px; }
.subj .sortcol svg { display: inline-block; margin: 0 6px 0 -2px; }
.subj td:first-child { padding-left: 1px; }
.i-brain { width: 18px; height: 13px; display: inline-block; vertical-align: -2px; margin-right: 4px; }
.w62 { width: 62px; } .w64 { width: 64px; } .w67 { width: 67px; } .w74 { width: 74px; }
.w80 { width: 80px; } .w81 { width: 81px; } .w85 { width: 85px; } .w90 { width: 90px; }
.w91 { width: 91px; } .w95 { width: 95px; } .w96 { width: 96px; } .w104 { width: 104px; }
.w105 { width: 105px; } .w116 { width: 116px; } .w118 { width: 118px; } .w120 { width: 120px; } .w140 { width: 140px; }
.hscroll { margin-top: auto; height: 16px; background: #dfdbdb; }
.thumb { height: 16px; width: 60%; background: #c0c0c0; border-radius: 8px; margin-left: 2px; }
.list-thumb { width: 800px; }

/* window frame */
.app { position: relative; min-height: 100vh; display: flex; flex-direction: column; border: 1px solid #888; border-right-color: #bbb; background: #eee; overflow: hidden; }
.titlebar { display: flex; align-items: center; gap: 5px; background: #fff; font-family: "Open Sans", "Noto Sans", sans-serif; color: #999; padding: 0 9px 0 8px; }
.titlebar .icon-btn { margin-left: auto; }
.main-title { height: 30px; }
.workspace { flex: 1; display: flex; gap: 5px; padding: 0 7px 0 8px; }
.left { flex: 1; min-width: 0; display: flex; flex-direction: column; }
.right { width: 295px; display: flex; flex-direction: column; }

.norm-head { display: flex; align-items: center; padding: 10px 0 3px 2px; }
.norms-label { width: 93px; }
.db-label { width: 121px; }
.combo { display: flex; align-items: center; flex: 0 1 550px; height: 25px; border: 1px solid #808080; border-radius: 5px; background: #9ac8f4; padding: 0 1px 0 7px; color: #000; }
.combo select { flex: 1; height: 23px; padding-left: 9px; font-weight: 700; background-position: right 7px center; border-right: 1px solid #999; }
.combo .icon-btn { width: 19px; }
.norm-head > .pre { margin-left: 3px; }
.norms-box { height: 107px; margin: 0 2px 0 2px; }
.create-row { display: flex; align-items: center; height: 34px; padding: 0 5px 0 4px; }
.create-wrap { width: 425px; }
.create-wrap::after { inset: -4px 1px 1px 2px; }
.create-btn { width: 100%; height: 31px; font-weight: 400; background: #fff; gap: 7px; }
.import { padding: 0 21px 0 13px; gap: 2px; border-right: 1px solid #999; height: 26px; }
.desc-label { padding: 0 9px 0 11px; }
.desc { flex: 1; }
.splitter { height: 9px; background: radial-gradient(circle, #999 1px, transparent 1px) 0 1px / 4px 3px; border-bottom: 1px solid #bbb; }
.samples-tab { padding: 0 6px 0 7px; }
.samples { flex: 0 0 407px; border-radius: 0 0 6px 6px; padding: 7px 6px 0; display: flex; flex-direction: column; }
.samples-box { height: 356px; display: flex; flex-direction: column; }
.samples-actions { display: flex; align-items: center; gap: 21px; height: 42px; padding-left: 9px; }
.samples-actions .plain { gap: 8px; }
.spatial { flex: 1; margin-top: 3px; border-radius: 6px; overflow: hidden; }
.spatial h2 { height: 25px; line-height: 24px; background: #fafafa; border-bottom: 1px solid #808080; padding-left: 7px; color: #222; }
.spatial-body { padding: 71px 17px 0; }
.pet { display: flex; align-items: center; gap: 23px; margin-top: 13px; padding-left: 5px; }

/* preview column */
.preview-head { display: flex; align-items: center; height: 43px; padding: 8px 1px 0 2px; }
.preview-head .more { margin-left: 7px; }
.face-btn { width: 31px; height: 31px; margin-left: auto; background: #fafafa; }
.preview { flex: 1; padding: 5px; }
.viewer { display: flex; }
.brain-view { width: 256px; height: 351px; }
.axis text { font-size: 40px; fill: #ff0; stroke: #00f; stroke-width: 6px; paint-order: stroke; }
.view-tools { flex: 1; display: flex; flex-direction: column; align-items: center; padding-right: 2px; }
.view-tools .icon-btn { height: 24px; width: 24px; }
.vtrack { flex: 1; width: 16px; margin: 4px 2px 3px 0; background: #dfdbdb; }
.zoom-row { display: flex; align-items: center; height: 27px; padding: 0 7px 0 2px; gap: 12px; }
.zoom-row .zi { margin-left: 3px; }
.zoom-val { width: 41px; margin: 0 -4px 0 -6px; }
.htrack { flex: 1; height: 16px; background: #dfdbdb; margin: 0 -2px; }
.mean-bar { display: flex; align-items: center; height: 28px; margin: 1px 1px 2px 0; padding: 0 1px 0 9px; border: 1px solid #808080; border-radius: 6px; background: #c0dd08; }
.dot { width: 11px; height: 11px; border: 1px solid #340; border-radius: 50%; background: #5a1; }
.mean-bar select { flex: 1; height: 24px; padding-left: 6px; background-position: right 10px center; }
.mean-bar .icon-btn { width: 19px; }
.subtabs .tab { width: 35px; padding: 0; }
.color-panel { padding: 10px 9px 0; margin-right: 1px; height: 231px; }
.crow { display: flex; align-items: center; }
.slice { height: 23px; margin-bottom: 10px; padding-left: 6px; }
.lead { margin-right: 13px; }
.slice .n1 { width: 52px; margin-right: 1px; }
.slice .n2 { width: 41px; }
.slice .icon-btn { width: 20px; }
.slice .icon-btn:last-child { margin-right: -5px; }
.slice .slider { flex: 1; margin: 0 8px 0 7px; }
.off .slider { margin-left: 0; }
.colors { height: 30px; padding: 0 2px 0 1px; }
.colors select { flex: 1; height: 22px; padding-left: 12px; background-position: right 7px center; }
.colors .icon-btn { width: 20px; }
.colors .inv { margin: 0 6px 0 3px; }
.colors .snap { padding-bottom: 4px; }
.range { height: 36px; padding: 0 0 0 8px; }
.range .field { flex: 1; height: 22px; }
.range .icon-btn { width: 37px; }
.ramp { width: 244px; height: 17px; margin: 0 0 0 11px; }
.percent { height: 36px; gap: 19px; padding-left: 14px; font-family: "Liberation Mono", monospace; font-size: 11px; }
.percent .faint { margin: 0 2px 0 5px; }
.small { width: 50px; }
.modes { height: 28px; margin: 1px -2px 0 -4px; }
.modes .btn { width: 24px; height: 28px; }
.modes .btn.sq { height: 24px; }
.modes .icon-btn { width: 31px; padding-right: 2px; }
.modes .wide { padding-right: 6px; }
.modes .tight { width: 28px; }
.modes .push { margin-left: auto; }
.radios { display: grid; grid-template-columns: 100px 94px 1fr; row-gap: 6px; margin: 6px 4px 0 5px; padding: 0 0 8px; border-bottom: 1px solid #aaa; white-space: nowrap; }
.radios label { display: flex; align-items: center; gap: 5px; }
.span2 { grid-column: span 2; }
.pooling { text-align: center; padding-top: 4px; }

.footer { display: flex; align-items: center; height: 53px; padding: 0 8px 2px 417px; }
.star { margin-right: auto; }
.restore { width: 200px; font-weight: 400; color: #888; padding-left: 3px; }
.save-norm { width: 115px; margin: 0 2px 0 4px; gap: 7px; }
.save-as { width: 86px; gap: 8px; margin-right: 2px; }
.stop { margin: 0 14px 0 187px; }
.cancel-main { width: 86px; gap: 10px; }

/* save dialog */
.dialog { position: absolute; top: 208px; left: 149px; right: 303px; bottom: 70px; padding: 3px; background: #eee; display: flex; flex-direction: column; }
.dialog-title { height: 28px; padding: 0 7px 3px 8px; flex: none; }
.dialog-body { flex: 1; display: flex; flex-direction: column; padding: 0 6px 8px 8px; }
.db-row { display: flex; align-items: center; height: 51px; padding-left: 6px; }
.db-row > label { width: 68px; }
.combo-mark { flex: 0 1 556px; padding: 3px; }
.combo-mark .combo { height: 31px; border-radius: 0; }
.db-tools { display: flex; align-items: center; margin-left: auto; padding-right: 5px; }
.db-tools .plain { gap: 9px; }
.db-tools .refresh { margin: 0 20px 0 26px; }
.db-tools .pin { margin-right: 8px; }
.name-row { display: flex; align-items: center; height: 23px; padding: 0 17px 0 8px; }
.name-row label { width: 72px; }
.name-row .field { flex: 1; padding-left: 3px; }
.name-row .red { margin: 0 22px 0 12px; }
.attach { gap: 9px; margin-right: 24px; }
.filters { display: flex; height: 124px; padding-top: 28px; }
.text-filters { flex: 1; display: grid; grid-template-columns: 105px 1fr; column-gap: 5px; row-gap: 1px; text-align: right; grid-auto-rows: 23px; align-items: center; }
.text-filters .check-line { grid-column: 2; padding: 1px 0 0 2px; }
.date-filters { display: grid; grid-template-columns: 76px 70px 35px 35px 47px 35px 1fr 36px; grid-auto-rows: 31px; align-items: center; width: 377px; border-right: 1px dashed #aaa; }
.date-filters span { text-align: right; white-space: nowrap; }
.date-filters i { font-style: normal; text-align: right; padding-right: 22px; }
.date-filters .icon-btn { justify-self: end; width: 36px; }
.date-filters i + .icon-btn { width: 20px; }
.group-filters { width: 151px; display: grid; grid-template-columns: 1fr 93px 22px; grid-template-rows: 33px 24px 26px; column-gap: 6px; row-gap: 3px; align-items: center; padding: 0 2px 0 0; margin-right: -1px; align-content: start; text-align: right; }
.group-filters > .icon-btn { padding-right: 8px; }
.group-filters > .field { margin: 0 -1px 0 1px; }
.heads { grid-column: 1 / 4; justify-self: end; width: 40px; height: 28px; margin: 5px 1px 0 0; }
.norm-tab { height: 30px; padding: 0 6px; gap: 6px; color: #333; }
.list-panel { flex: 1; padding: 5px 5px 0; display: flex; flex-direction: column; }
.list-box { flex: 1; display: flex; flex-direction: column; }
.list-tools { display: flex; align-items: center; height: 42px; padding: 0 0 3px 12px; }
.list-tools .plain { gap: 13px; }
.list-tools .all { gap: 11px; }
.list-tools > .icon-btn { margin: 0 17px 0 25px; }
.vsep { height: 30px; border-left: 1px dashed #aaa; margin-right: 16px; }
.vsep.near { margin: 0 16px 0 2px; }
.export-mark { margin-left: 18px; padding: 3px; }
.export { display: flex; align-items: center; gap: 2px; width: 103px; height: 33px; padding-left: 6px; background: #fff; border: 0; font-weight: 700; }
.list-tools .more { margin-left: 20px; }
.dialog-actions { display: grid; grid-template-columns: 1fr 1fr; gap: 2px; margin-top: 8px; }
.dialog-actions .btn { gap: 8px; }
.dialog-actions .green { background: #8bc55b; }

/* file list dialog */
.files { position: absolute; z-index: 3; left: 220px; right: 15px; top: 335px; height: 169px; padding: 4px 3px 3px; background: #eee; }
.files-title { height: 32px; padding: 0 7px 0 9px; color: #111; border-top: 1px solid #444; }
.files-body { padding: 8px 6px 0 9px; }
.tree { height: 50px; border: 1px solid #ddd; padding: 4px; background: #fafafa; box-shadow: inset 0 0 0 3px #eee; }
.node { display: flex; align-items: center; gap: 6px; height: 18px; }
.leaf { display: flex; align-items: center; gap: 7px; margin-left: 22px; height: 21px; white-space: nowrap; position: relative; }
.leaf::before { content: ""; position: absolute; left: -17px; top: 0; width: 10px; height: 11px; border: solid #b8cfe5; border-width: 0 0 1px 1px; }
.files .check-line { padding: 5px 0 9px 2px; }
.files-actions { display: grid; grid-template-columns: 1fr 1fr; gap: 2px; }
.files-actions .btn { gap: 11px; }
.files-actions .save { gap: 17px; }
.arrows { position: absolute; z-index: 4; inset: 3px; width: calc(100% - 6px); height: calc(100% - 6px); pointer-events: none; }
```
